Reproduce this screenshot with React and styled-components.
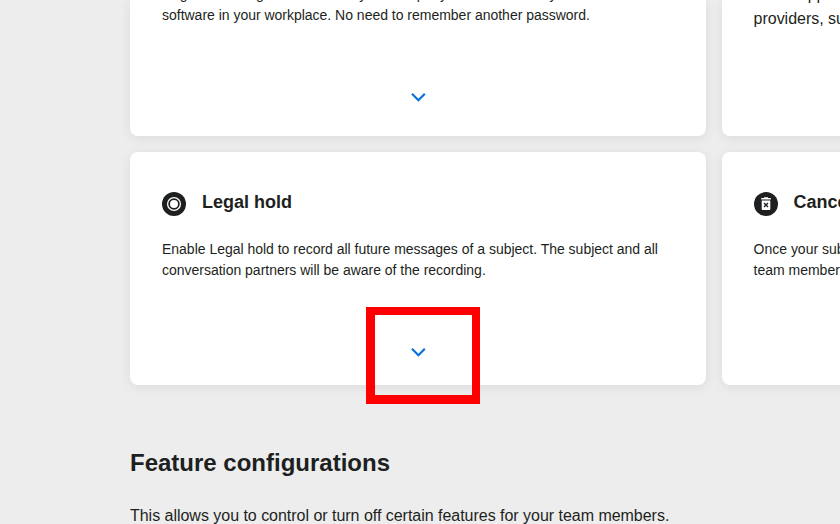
import React from "react";
import styled, { createGlobalStyle } from "styled-components";

const GlobalStyle = createGlobalStyle`
  * { box-sizing: border-box; }
  html { overflow: hidden; }
  body { margin: 0; background: #ededed; color: #1d1f21; font-family: "Liberation Sans", Arial, sans-serif; }
`;

const Page = styled.main`
  position: relative;
  width: 840px;
  height: 524px;
  padding-left: 130px;
  overflow: hidden;
  background: #ededed;
`;

const CardGrid = styled.section`
  display: grid;
  grid-template-columns: 575.6px 575.6px;
  grid-template-rows: 136px 233px;
  gap: 16px;
`;

const Card = styled.article`
  display: flex;
  flex-direction: column;
  min-width: 0;
  padding: ${(p) => (p.$continued ? "0 32px 27px" : "40px 32px 21px")};
  background: #fff;
  border-radius: ${(p) => (p.$continued ? "0 0 8px 8px" : "8px")};
  box-shadow: 0 2px 12px rgba(0, 0, 0, 0.08);
`;

const CardHeader = styled.header`
  display: flex;
  height: 24px;
  margin-bottom: 23px;
`;

const IconBadge = styled.svg`
  flex: none;
  width: 24px;
  height: 24px;
  margin-right: 16px;
`;

const CardTitle = styled.h3`
  margin: 0;
  font-size: 18px;
  line-height: 20px;
  font-weight: 700;
  white-space: nowrap;
`;

const CardText = styled.p`
  margin: ${(p) => p.$top || 0}px 0 0;
  font-size: ${(p) => (p.$large ? 16 : 14)}px;
  line-height: ${(p) => (p.$large ? 24 : 21)}px;
  letter-spacing: ${(p) => (p.$large ? -0.025 : -0.014)}px;
  white-space: nowrap;
`;

const Expand = styled.button`
  display: flex;
  align-self: center;
  margin-top: auto;
  padding: 0;
  border: 0;
  background: none;
`;

const Section = styled.section`
  padding-top: 62px;
`;

const SectionTitle = styled.h2`
  margin: 0;
  font-size: 24px;
  line-height: 32px;
`;

const SectionText = styled.p`
  margin: 25px 0 0;
  font-size: 16px;
  line-height: 24px;
  letter-spacing: -0.025px;
  white-space: nowrap;
`;

const Highlight = styled.div`
  position: absolute;
  left: 366px;
  top: 307px;
  width: 114px;
  height: 97px;
  border: solid #f00;
  border-width: 8px 8px 9px 9px;
  pointer-events: none;
`;

const ExpandButton = () => (
  <Expand aria-label="Expand">
    <svg width="24" height="24" viewBox="0 0 24 24" fill="none">
      <path d="M6 8.8 12.4 15.2l6.4-6.4" stroke="#0772de" strokeWidth="2.2" />
    </svg>
  </Expand>
);

const RecordIcon = () => (
  <IconBadge viewBox="0 0 24 24" fill="none">
    <circle cx="12" cy="12" r="12" fill="#1d1f21" />
    <circle cx="12" cy="12" r="6.4" stroke="#fff" strokeWidth="1.3" />
    <circle cx="12" cy="12" r="4" fill="#fff" />
  </IconBadge>
);

const TrashIcon = () => (
  <IconBadge viewBox="0 0 24 24" fill="none">
    <circle cx="12" cy="12" r="12" fill="#1d1f21" />
    <path d="M7.2 6H10V5.3h4V6h2.8v1.6H7.2ZM7.7 8.4h8.6V17q0 1-1 1H8.7q-1 0-1-1Z" fill="#fff" />
    <path d="m10 11 4 4m0-4-4 4" stroke="#1d1f21" strokeWidth="1.4" />
  </IconBadge>
);

export default function App() {
  return (
    <>
      <GlobalStyle />
      <Page>
        <CardGrid>
          <Card $continued>
            <CardText $top={-16}>
              Register and log in to Wire with your company details as for any other
              <br />
              software in your workplace. No need to remember another password.
            </CardText>
            <ExpandButton />
          </Card>
          <Card $continued>
            <CardText $large $top={-17}>
              Wire supports identity
              <br />
              providers, such as
            </CardText>
          </Card>
          <Card>
            <CardHeader>
              <RecordIcon />
              <CardTitle>Legal hold</CardTitle>
            </CardHeader>
            <CardText>
              Enable Legal hold to record all future messages of a subject. The subject and all
              <br />
              conversation partners will be aware of the recording.
            </CardText>
            <ExpandButton />
          </Card>
          <Card>
            <CardHeader>
              <TrashIcon />
              <CardTitle>Cancel subscription</CardTitle>
            </CardHeader>
            <CardText>
              Once your subscription is canceled, your
              <br />
              team members will lose access.
            </CardText>
          </Card>
        </CardGrid>
        <Section>
          <SectionTitle>Feature configurations</SectionTitle>
          <SectionText>
            This allows you to control or turn off certain features for your team members.
          </SectionText>
        </Section>
        <Highlight />
      </Page>
    </>
  );
}
